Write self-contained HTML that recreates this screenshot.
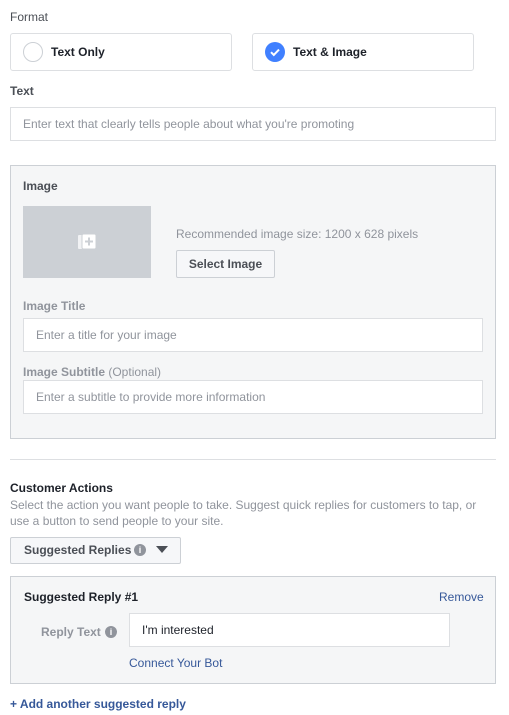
<!DOCTYPE html>
<html><head><meta charset="utf-8"><style>
*{box-sizing:border-box;margin:0;padding:0}
body{width:509px;height:715px;background:#fff;font-family:"Liberation Sans",Arial,sans-serif;font-size:12px;color:#1d2129;position:relative;overflow:hidden}
.a{position:absolute;white-space:nowrap}
.box{position:absolute;border:1px solid #dddfe2;background:#fff}
.lbl{font-weight:bold;color:#4b4f56}
.ph{color:#90949c}
.panel{position:absolute;background:#f5f6f7;border:1px solid #ccd0d5}
.link{color:#365899}
</style></head><body>
<div class="a" style="left:10px;top:10px;color:#4b4f56">Format</div>
<div class="box" style="left:10px;top:33px;width:222px;height:38px;border-radius:3px"></div>
<div class="a" style="left:23px;top:42px;width:20px;height:20px;border:1px solid #ccd0d5;border-radius:50%"></div>
<div class="a" style="left:51px;top:45px;font-weight:bold">Text Only</div>
<div class="box" style="left:252px;top:33px;width:222px;height:38px;border-radius:3px"></div>
<div class="a" style="left:265px;top:42px;width:20px;height:20px;background:#4080ff;border-radius:50%"><svg width="20" height="20" viewBox="0 0 20 20"><path d="M6 10.2l2.8 2.8 5.2-5.4" stroke="#fff" stroke-width="2" fill="none"/></svg></div>
<div class="a" style="left:293px;top:45px;font-weight:bold">Text &amp; Image</div>
<div class="a lbl" style="left:10px;top:84px">Text</div>
<div class="box" style="left:10px;top:107px;width:486px;height:34px"></div>
<div class="a ph" style="left:23px;top:117px">Enter text that clearly tells people about what you're promoting</div>

<div class="panel" style="left:10px;top:165px;width:486px;height:274px"></div>
<div class="a lbl" style="left:23px;top:179px">Image</div>
<div class="a" style="left:23px;top:206px;width:128px;height:72px;background:#ccd0d5"></div>
<svg class="a" style="left:76px;top:232px" width="22" height="20" viewBox="0 0 22 20"><rect x="2" y="3" width="6" height="14" rx="1" fill="#f1f2f4"/><rect x="6" y="2" width="14" height="15" rx="1.5" fill="#fff" stroke="#ccd0d5"/><path d="M13 5.5v8M9 9.5h8" stroke="#ccd0d5" stroke-width="2"/></svg>
<div class="a ph" style="left:176px;top:227px">Recommended image size: 1200 x 628 pixels</div>
<div class="a" style="left:176px;top:250px;width:99px;height:28px;border:1px solid #ccd0d5;background:#f6f7f9;border-radius:2px;font-weight:bold;color:#4b4f56;text-align:center;line-height:26px">Select Image</div>
<div class="a lbl" style="left:23px;top:299px;color:#90949c">Image Title</div>
<div class="box" style="left:23px;top:318px;width:460px;height:34px"></div>
<div class="a ph" style="left:36px;top:328px;color:#90949c">Enter a title for your image</div>
<div class="a" style="left:23px;top:365px;color:#90949c"><b>Image Subtitle</b> (Optional)</div>
<div class="box" style="left:23px;top:380px;width:460px;height:34px"></div>
<div class="a ph" style="left:36px;top:390px">Enter a subtitle to provide more information</div>

<div class="a" style="left:10px;top:459px;width:486px;height:1px;background:#dddfe2"></div>
<div class="a" style="left:10px;top:481px;font-weight:bold">Customer Actions</div>
<div class="a ph" style="left:10px;top:497px;line-height:16px">Select the action you want people to take. Suggest quick replies for customers to tap, or<br>use a button to send people to your site.</div>
<div class="a" style="left:10px;top:537px;width:171px;height:27px;border:1px solid #ccd0d5;background:#f6f7f9;border-radius:2px"></div>
<div class="a" style="left:24px;top:543px;font-weight:bold;color:#4b4f56">Suggested Replies</div>
<div class="a" style="left:134px;top:544px;width:12px;height:12px;border-radius:50%;background:#90949c;color:#fff;font-size:9px;font-weight:bold;text-align:center;line-height:12px">i</div>
<svg class="a" style="left:156px;top:546px" width="12" height="8"><path d="M0 0h12L6 7z" fill="#4b4f56"/></svg>

<div class="panel" style="left:10px;top:576px;width:486px;height:108px"></div>
<div class="a" style="left:24px;top:590px;font-weight:bold">Suggested Reply #1</div>
<div class="a link" style="left:439px;top:590px">Remove</div>
<div class="a" style="left:41px;top:625px;font-weight:bold;color:#90949c">Reply Text</div>
<div class="a" style="left:105px;top:626px;width:12px;height:12px;border-radius:50%;background:#90949c;color:#fff;font-size:9px;font-weight:bold;text-align:center;line-height:12px">i</div>
<div class="box" style="left:129px;top:613px;width:321px;height:34px"></div>
<div class="a" style="left:142px;top:623px">I'm interested</div>
<div class="a link" style="left:129px;top:656px">Connect Your Bot</div>
<div class="a link" style="left:10px;top:697px;font-weight:bold">+ Add another suggested reply</div>
</body></html>
